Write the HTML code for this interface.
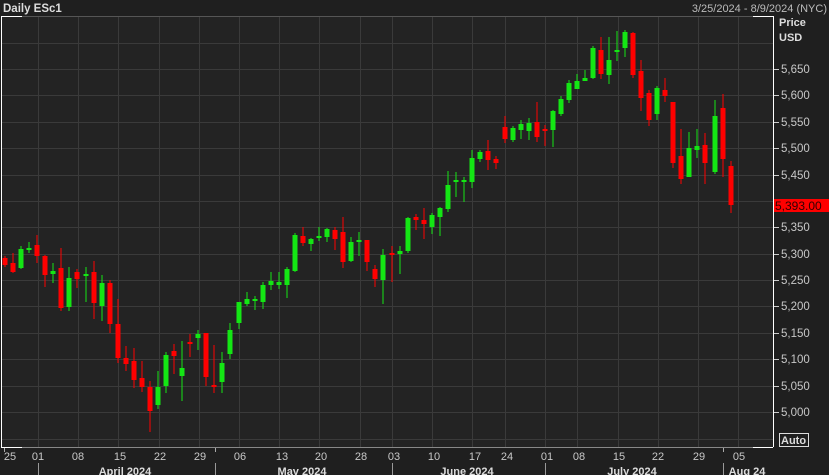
<!DOCTYPE html>
<html><head><meta charset="utf-8"><style>
html,body{margin:0;padding:0;background:#1f1f1f;width:829px;height:475px;overflow:hidden}
svg{display:block;font-family:"Liberation Sans",sans-serif}
</style></head><body>
<svg width="829" height="475" viewBox="0 0 829 475" xmlns="http://www.w3.org/2000/svg">
<rect width="829" height="475" fill="#1f1f1f"/>
<rect x="1" y="16" width="772" height="431" fill="#232323"/>
<g stroke="#3a3a3a" stroke-width="1">
<line x1="1" x2="773" y1="43.5" y2="43.5"/><line x1="1" x2="773" y1="69.5" y2="69.5"/><line x1="1" x2="773" y1="95.5" y2="95.5"/><line x1="1" x2="773" y1="122.5" y2="122.5"/><line x1="1" x2="773" y1="148.5" y2="148.5"/><line x1="1" x2="773" y1="175.5" y2="175.5"/><line x1="1" x2="773" y1="201.5" y2="201.5"/><line x1="1" x2="773" y1="227.5" y2="227.5"/><line x1="1" x2="773" y1="254.5" y2="254.5"/><line x1="1" x2="773" y1="280.5" y2="280.5"/><line x1="1" x2="773" y1="306.5" y2="306.5"/><line x1="1" x2="773" y1="333.5" y2="333.5"/><line x1="1" x2="773" y1="359.5" y2="359.5"/><line x1="1" x2="773" y1="386.5" y2="386.5"/><line x1="1" x2="773" y1="412.5" y2="412.5"/><line x1="1" x2="773" y1="439.5" y2="439.5"/>
<line y1="16" y2="447" x1="38.5" x2="38.5"/><line y1="16" y2="447" x1="78.5" x2="78.5"/><line y1="16" y2="447" x1="118.5" x2="118.5"/><line y1="16" y2="447" x1="159.5" x2="159.5"/><line y1="16" y2="447" x1="199.5" x2="199.5"/><line y1="16" y2="447" x1="239.5" x2="239.5"/><line y1="16" y2="447" x1="279.5" x2="279.5"/><line y1="16" y2="447" x1="319.5" x2="319.5"/><line y1="16" y2="447" x1="360.5" x2="360.5"/><line y1="16" y2="447" x1="392.5" x2="392.5"/><line y1="16" y2="447" x1="432.5" x2="432.5"/><line y1="16" y2="447" x1="472.5" x2="472.5"/><line y1="16" y2="447" x1="505.5" x2="505.5"/><line y1="16" y2="447" x1="545.5" x2="545.5"/><line y1="16" y2="447" x1="577.5" x2="577.5"/><line y1="16" y2="447" x1="618.5" x2="618.5"/><line y1="16" y2="447" x1="658.5" x2="658.5"/><line y1="16" y2="447" x1="698.5" x2="698.5"/><line y1="16" y2="447" x1="738.5" x2="738.5"/>
</g>
<g id="c"></g>
<!-- frame -->
<line x1="1.5" y1="16" x2="1.5" y2="447" stroke="#fff"/>
<line x1="1" y1="447.5" x2="773" y2="447.5" stroke="#888"/>
<line x1="1" y1="447.5" x2="22" y2="447.5" stroke="#fff"/>
<line x1="753" y1="447.5" x2="773" y2="447.5" stroke="#fff"/>
<line x1="1" y1="16.5" x2="22" y2="16.5" stroke="#fff"/>
<line x1="22" y1="16.5" x2="753" y2="16.5" stroke="#555"/>
<line x1="753" y1="16.5" x2="773" y2="16.5" stroke="#fff"/>
<line x1="773.5" y1="16" x2="773.5" y2="447" stroke="#fff"/>
<!-- header -->
<text x="3" y="12" font-size="11.5" font-weight="bold" fill="#ddd">Daily ESc1</text>
<text x="827" y="12" font-size="11" fill="#bbb" text-anchor="end">3/25/2024 - 8/9/2024 (NYC)</text>
<text x="779" y="26" font-size="11" font-weight="bold" fill="#ddd">Price</text>
<text x="779" y="41" font-size="11" font-weight="bold" fill="#ddd">USD</text>
<g font-size="11.5" fill="#c8c8c8">
<g stroke="#ccc"><line x1="774" x2="779" y1="69.5" y2="69.5"/><line x1="774" x2="779" y1="95.5" y2="95.5"/><line x1="774" x2="779" y1="122.5" y2="122.5"/><line x1="774" x2="779" y1="148.5" y2="148.5"/><line x1="774" x2="779" y1="175.5" y2="175.5"/><line x1="774" x2="779" y1="227.5" y2="227.5"/><line x1="774" x2="779" y1="254.5" y2="254.5"/><line x1="774" x2="779" y1="280.5" y2="280.5"/><line x1="774" x2="779" y1="306.5" y2="306.5"/><line x1="774" x2="779" y1="333.5" y2="333.5"/><line x1="774" x2="779" y1="359.5" y2="359.5"/><line x1="774" x2="779" y1="386.5" y2="386.5"/><line x1="774" x2="779" y1="412.5" y2="412.5"/></g>
<text x="781" y="73">5,650</text><text x="781" y="99">5,600</text><text x="781" y="126">5,550</text><text x="781" y="152">5,500</text><text x="781" y="179">5,450</text><text x="781" y="231">5,350</text><text x="781" y="258">5,300</text><text x="781" y="284">5,250</text><text x="781" y="310">5,200</text><text x="781" y="337">5,150</text><text x="781" y="363">5,100</text><text x="781" y="390">5,050</text><text x="781" y="416">5,000</text>
</g>
<rect x="774" y="199" width="55" height="13" fill="#ff0000"/>
<text x="775" y="210" font-size="12" fill="#300">5,393.00</text>
<rect x="779.5" y="433.5" width="29" height="13" fill="none" stroke="#ddd"/>
<text x="781" y="444" font-size="11" font-weight="bold" fill="#ddd">Auto</text>
<!-- bottom axis -->
<g stroke="#aaa"><line x1="4.5" x2="4.5" y1="448" y2="452"/><line x1="215.5" x2="215.5" y1="448" y2="452"/><line x1="723.5" x2="723.5" y1="448" y2="452"/></g>
<g font-size="11" fill="#c8c8c8" text-anchor="middle">
<text x="10" y="460">25</text><text x="38" y="460">01</text><text x="78" y="460">08</text><text x="120" y="460">15</text><text x="160" y="460">22</text><text x="200" y="460">29</text><text x="240" y="460">06</text><text x="282" y="460">13</text><text x="321" y="460">20</text><text x="361" y="460">28</text><text x="394" y="460">03</text><text x="434" y="460">10</text><text x="475" y="460">17</text><text x="507" y="460">24</text><text x="547" y="460">01</text><text x="579" y="460">08</text><text x="619" y="460">15</text><text x="658" y="460">22</text><text x="699" y="460">29</text><text x="739" y="460">05</text>
</g>
<g stroke="#999"><line x1="38.5" x2="38.5" y1="463" y2="475"/><line x1="215.5" x2="215.5" y1="463" y2="475"/><line x1="392.5" x2="392.5" y1="463" y2="475"/><line x1="545.5" x2="545.5" y1="463" y2="475"/><line x1="723.5" x2="723.5" y1="463" y2="475"/></g>
<g font-size="11" font-weight="bold" fill="#ddd" text-anchor="middle">
<text x="125" y="475">April 2024</text><text x="302" y="475">May 2024</text><text x="467" y="475">June 2024</text><text x="632" y="475">July 2024</text><text x="747" y="475">Aug 24</text>
</g>
</svg>
<script>
var d=[[5,256,267,258,265,0],[13,253,273,263,272,0],[21,246,269,249,268,1],[29,242,253,248,250,1],[37,235,263,245,256,0],[45,255,287,256,275,0],[53,263,283,271,274,1],[61,248,311,268,308,0],[69,267,311,278,307,1],[77,269,288,272,279,0],[86,267,302,274,276,1],[94,261,319,272,303,0],[102,275,321,283,306,1],[110,280,333,283,324,0],[118,299,363,324,358,0],[126,346,371,358,364,0],[134,348,388,361,380,0],[142,361,392,378,387,0],[150,381,432,387,411,0],[158,371,409,387,405,1],[166,352,393,355,386,1],[174,344,374,351,356,0],[182,341,401,368,376,1],[190,334,357,342,344,0],[198,330,350,334,338,1],[206,333,386,333,377,0],[214,345,393,385,387,0],[222,352,393,363,382,1],[230,323,359,330,354,1],[239,302,329,302,323,1],[247,292,306,299,304,1],[255,296,310,299,301,1],[263,282,309,285,302,1],[271,272,290,281,285,1],[279,272,289,282,285,1],[287,267,298,269,285,1],[295,233,272,235,271,1],[303,227,246,236,243,0],[311,238,251,239,244,1],[319,227,241,236,238,1],[327,228,242,229,237,1],[335,227,250,230,239,0],[343,217,268,232,262,0],[351,237,262,242,261,1],[359,232,256,240,242,1],[367,240,271,240,262,0],[375,265,287,269,279,0],[383,249,304,255,280,1],[392,246,282,253,255,0],[400,246,274,251,254,1],[408,217,253,218,251,1],[416,214,230,217,220,0],[424,208,239,220,224,0],[432,213,234,215,227,1],[440,207,236,208,217,1],[448,171,212,185,209,1],[456,172,197,180,182,1],[464,177,202,180,182,1],[472,150,188,158,182,1],[480,150,162,152,159,1],[488,140,170,151,160,0],[496,156,169,159,163,0],[505,116,143,127,139,0],[513,126,142,128,140,1],[521,120,139,124,130,1],[529,118,140,123,131,1],[537,102,142,122,137,0],[545,125,146,129,130,0],[553,110,147,111,130,1],[561,96,116,99,114,1],[569,80,103,83,100,1],[577,74,89,81,89,1],[585,70,81,78,81,1],[593,46,79,48,78,1],[601,37,79,50,74,0],[609,37,84,60,75,1],[617,31,61,50,52,1],[625,30,57,32,48,1],[633,32,78,33,75,0],[641,60,111,71,98,0],[649,90,126,93,120,0],[657,86,120,88,114,1],[665,78,102,90,96,0],[673,102,168,102,163,0],[681,129,184,156,179,0],[689,132,177,148,177,1],[697,129,158,146,150,1],[705,133,184,145,163,0],[715,100,174,116,172,1],[723,94,177,108,159,0],[731,161,213,166,205,0]];
var s='';d.forEach(function(c){var col=c[5]?'#14e614':'#ff0000';s+='<rect x="'+(c[0]-0.5)+'" y="'+c[1]+'" width="1" height="'+(c[2]-c[1])+'" fill="'+col+'"/>';s+='<rect x="'+(c[0]-2.5)+'" y="'+c[3]+'" width="5" height="'+Math.max(2,c[4]-c[3])+'" fill="'+col+'"/>';});
document.getElementById('c').innerHTML=s;
</script>
</body></html>
